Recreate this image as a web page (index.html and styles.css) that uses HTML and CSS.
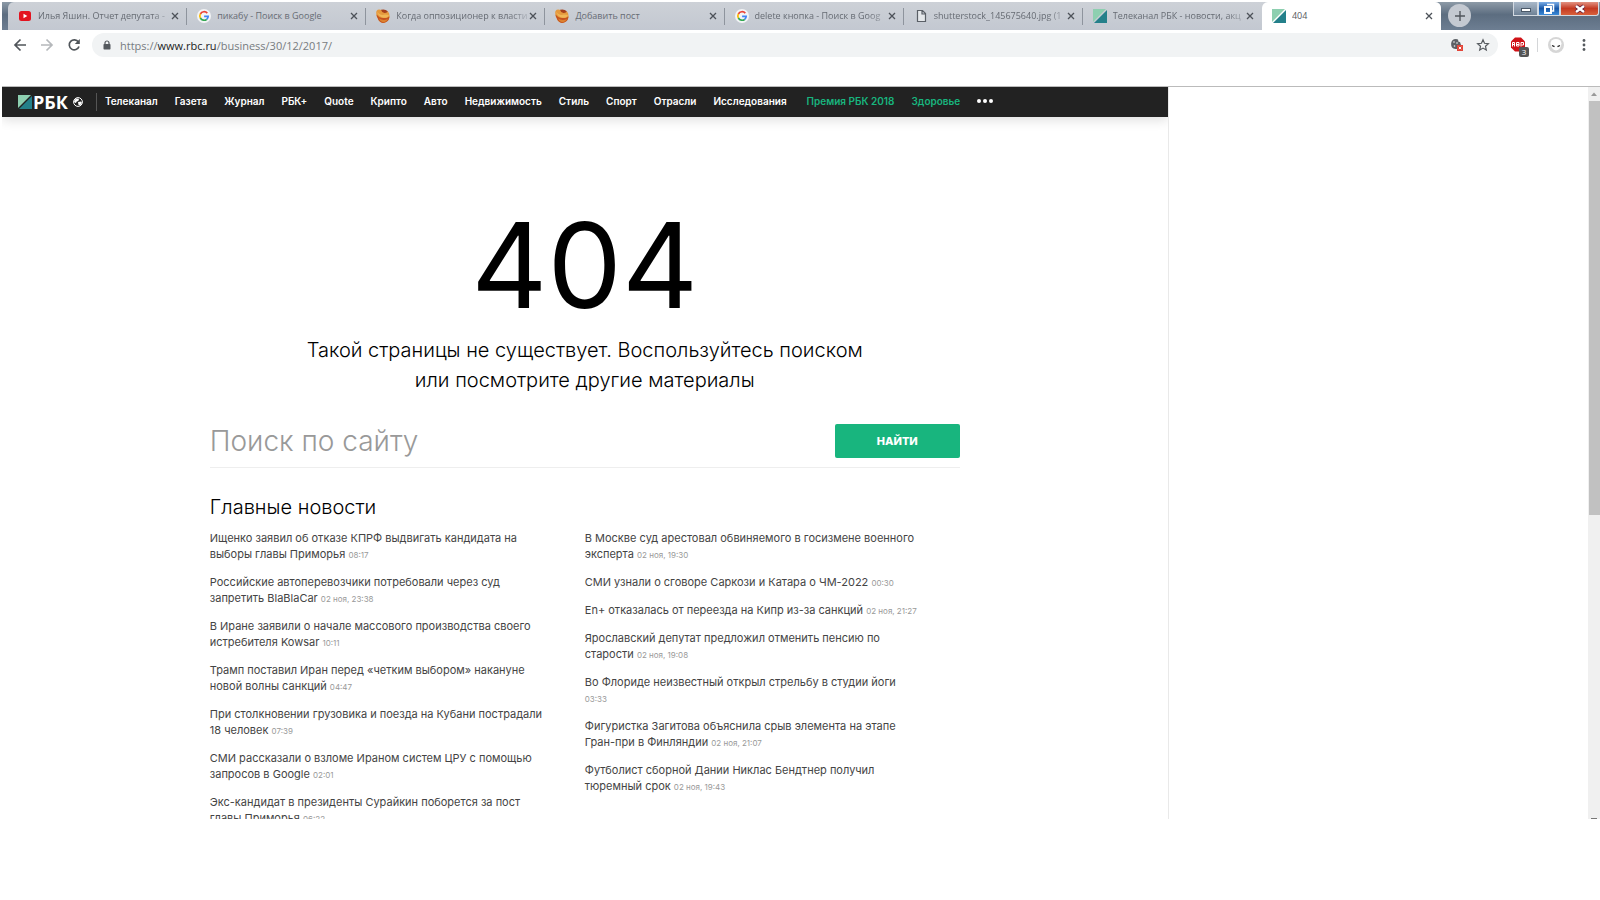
FILE: index.html
```html
<!DOCTYPE html>
<html lang="ru">
<head>
<meta charset="utf-8">
<title>404</title>
<link rel="stylesheet" href="styles.css">
</head>
<body>
<svg class="defs" aria-hidden="true">
  <defs>
    <symbol id="rbc" viewBox="0 0 14 14"><path d="M0 0h13L0 13z" fill="#8dcfb0"/><path d="M14 1v13H1z" fill="#24808a"/></symbol>
    <symbol id="google" viewBox="0 0 14 14"><circle cx="7" cy="7" r="7" fill="#f3f4f6"/><g fill="none" stroke-width="1.7"><path d="M10.3 4.1A4.2 4.2 0 0 0 3.4 5" stroke="#ea4335"/><path d="M3.4 4.9a4.2 4.2 0 0 0 0 4.2" stroke="#fbbc05"/><path d="M3.4 9a4.2 4.2 0 0 0 6.4 1.3" stroke="#34a853"/><path d="M9.7 10.4A4.2 4.2 0 0 0 11.2 7.3H7.1" stroke="#4285f4"/></g></symbol>
    <symbol id="pikabu" viewBox="0 0 14 14"><path d="M.5 2Q2 0 4.500.8L12 2.500Q14 4.500 13.400 9 12 13 7.500 14 3 13.500 1.800 9.500-.5 5 .5 2z" fill="#e59a3e"/><path d="M.6 5.500q3 3.800 7.400 3.500 3.500 0 5.500-1.500-.3 3.500-2.500 5Q7.500 15 4.500 13 2 11.500 1.800 9.200.5 7.500.6 5.500z" fill="#c4521f"/><path d="M3 9.500q4 2.500 9 .5-1.500 3-5 3.200Q4 12.500 3 9.500z" fill="#dc8230"/><path d="M.8 2.500Q4 7 9 5.500l4 .5Q12 9 8 8.800 3 8.500.8 2.500z" fill="#f0b758"/><path d="M5 .8Q9-.5 11.800 2.300 11 4.200 8.500 4 5.500 3.500 5 .8z" fill="#a5411c"/></symbol>
    <symbol id="close" viewBox="0 0 8 8"><path d="M1 1l6 6M7 1L1 7" stroke="#4d5259" stroke-width="1.300" fill="none"/></symbol>
  </defs>
</svg>
<div class="window">
  <div class="tabstrip">
    <div class="tabs">
      <div class="tab"><svg class="fav" viewBox="0 0 14 14"><rect x="1" y="2" width="12" height="10" rx="2.500" fill="#e3131f"/><path d="M5.500 4.800v4.400L9.300 7z" fill="#fff"/></svg><span class="title fade">Илья Яшин. Отчет депутата - </span><button class="x" aria-label="Закрыть"><svg><use href="#close"/></svg></button></div>
      <div class="tab"><svg class="fav"><use href="#google"/></svg><span class="title">пикабу - Поиск в Google</span><button class="x" aria-label="Закрыть"><svg><use href="#close"/></svg></button></div>
      <div class="tab"><svg class="fav"><use href="#pikabu"/></svg><span class="title fade">Когда оппозиционер к власти</span><button class="x" aria-label="Закрыть"><svg><use href="#close"/></svg></button></div>
      <div class="tab"><svg class="fav"><use href="#pikabu"/></svg><span class="title">Добавить пост</span><button class="x" aria-label="Закрыть"><svg><use href="#close"/></svg></button></div>
      <div class="tab"><svg class="fav"><use href="#google"/></svg><span class="title fade">delete кнопка - Поиск в Goog</span><button class="x" aria-label="Закрыть"><svg><use href="#close"/></svg></button></div>
      <div class="tab"><svg class="fav" viewBox="0 0 14 14"><path d="M3.500 1.500h5l3 3v8h-8zM8 1.500V5h3.500" fill="#e4e7ea" stroke="#5a5f66" stroke-width="1.200"/></svg><span class="title fade">shutterstock_145675640.jpg (1</span><button class="x" aria-label="Закрыть"><svg><use href="#close"/></svg></button></div>
      <div class="tab last"><svg class="fav"><use href="#rbc"/></svg><span class="title fade">Телеканал РБК - новости, акц</span><button class="x" aria-label="Закрыть"><svg><use href="#close"/></svg></button></div>
      <div class="tab active"><svg class="fav"><use href="#rbc"/></svg><span class="title">404</span><button class="x" aria-label="Закрыть"><svg><use href="#close"/></svg></button></div>
    </div>
    <button class="newtab" aria-label="Новая вкладка"><svg viewBox="0 0 10 10"><path d="M5 0v10M0 5h10" stroke="#50555c" stroke-width="1.400"/></svg></button>
    <div class="controls">
      <button class="min" aria-label="Свернуть"><svg viewBox="0 0 12 12"><rect x="1.500" y="5.500" width="9" height="3" fill="#fff" stroke="#4a5868"/></svg></button>
      <button class="max" aria-label="Развернуть"><svg viewBox="0 0 12 12"><path d="M4 1.500h6.500V8H9" fill="none" stroke="#fff" stroke-width="1.500"/><rect x="2" y="4" width="6" height="6" fill="none" stroke="#fff" stroke-width="2"/></svg></button>
      <button class="quit" aria-label="Закрыть окно"><svg viewBox="0 0 12 12"><path d="M2 3l8 6M10 3l-8 6" stroke="#513" stroke-width="4"/><path d="M2 3l8 6M10 3l-8 6" stroke="#fff" stroke-width="2.500"/></svg></button>
    </div>
  </div>
  <div class="toolbar">
    <div class="history">
      <button aria-label="Назад"><svg viewBox="0 0 14 14"><path d="M13 7H2M7.500 1.500L2 7l5.500 5.500" fill="none" stroke="#50555a" stroke-width="1.700"/></svg></button>
      <button aria-label="Вперед"><svg viewBox="0 0 14 14"><path d="M1 7h11M6.500 1.500L12 7l-5.500 5.500" fill="none" stroke="#b5b8bb" stroke-width="1.700"/></svg></button>
      <button aria-label="Обновить"><svg viewBox="0 0 14 14"><path d="M11.400 4A5 5 0 1 0 12 8.500" fill="none" stroke="#50555a" stroke-width="1.700"/><path d="M12.800 1v5h-5z" fill="#50555a"/></svg></button>
    </div>
    <div class="omnibox">
      <svg class="lock" viewBox="0 0 8 10"><path d="M2 4.500V3a2 2 0 0 1 4 0v1.500" fill="none" stroke="#55595e" stroke-width="1.200"/><rect x=".5" y="4" width="7" height="5.500" rx=".7" fill="#55595e"/></svg>
      <span class="url">https://<b>www.rbc.ru</b>/business/30/12/2017/</span>
      <button aria-label="Файлы cookie"><svg viewBox="0 0 14 14"><path d="M6 1a5 5 0 1 0 5 6L10 4 8.500 3.800 8 1.600z" fill="#5c6065"/><circle cx="4" cy="4" r=".8" fill="#f1f3f4"/><circle cx="7" cy="5" r=".8" fill="#f1f3f4"/><circle cx="4.500" cy="8" r=".8" fill="#f1f3f4"/><rect x="7" y="7" width="6" height="6" fill="#e34538"/><path d="M8.800 8.800l2.400 2.400m0-2.400l-2.400 2.400" stroke="#fff"/></svg></button>
      <button aria-label="В закладки"><svg viewBox="0 0 14 14"><path d="M7 1.800l1.500 3.500 3.900.4-2.900 2.600.8 3.800L7 10.100l-3.300 2 .8-3.800-2.900-2.600 3.900-.4z" fill="none" stroke="#55595e" stroke-width="1.200"/></svg></button>
    </div>
    <div class="extras">
      <button class="abp" aria-label="Adblock Plus"><svg viewBox="0 0 18 18"><path d="M5 1.500h6l4 4v6l-4 4H5l-4-4v-6z" fill="#d01217"/><path d="M2.500 10.500v-4h2v4M2.500 8.500h2M6.500 6.500h2.500v3.500h-2.500zM6.500 8.500h2.500M11 10.500v-4h2.500v2.500h-2" fill="none" stroke="#fff"/></svg><span class="count">3</span></button>
      <i class="bar"></i>
      <button aria-label="Профиль"><svg viewBox="0 0 18 18"><circle cx="9" cy="9" r="8" fill="#d6d6d6"/><path d="M3.500 7.500a5.500 4.500 0 0 1 11 0q-.5 6-5.500 7-5-1-5.500-7z" fill="#fff"/><path d="M5 9.500l2.500 1.200M13 9.500l-2.500 1.200" stroke="#222" stroke-width="1.300"/></svg></button>
      <button class="more" aria-label="Меню"><svg viewBox="0 0 14 14"><g fill="#55595e"><circle cx="7" cy="2.500" r="1.400"/><circle cx="7" cy="7" r="1.400"/><circle cx="7" cy="11.500" r="1.400"/></g></svg></button>
    </div>
  </div>
  <div class="viewport">
    <div class="page">
      <header class="topline">
        <a class="logo" href="#"><svg><use href="#rbc"/></svg>РБК</a>
        <button class="region" aria-label="Регион"><svg viewBox="0 0 10 10"><circle cx="5" cy="5" r="4.400" fill="none" stroke="#fff" stroke-width="1"/><path d="M1 4l2-2.500 3 .3-.5 2-2 1L3 6 1.500 5.500zM5 5l3-.5 1 1.500-2 2.500L5.500 8z" fill="#fff"/></svg></button>
        <nav>
          <a href="#">Телеканал</a><a href="#">Газета</a><a href="#">Журнал</a><a href="#">РБК+</a><a href="#">Quote</a><a href="#">Крипто</a><a href="#">Авто</a><a href="#">Недвижимость</a><a href="#">Стиль</a><a href="#">Спорт</a><a href="#">Отрасли</a><a href="#">Исследования</a><a class="green first" href="#">Премия РБК 2018</a><a class="green" href="#">Здоровье</a>
          <button class="dots" aria-label="Еще"><svg viewBox="0 0 16 4"><g fill="#fff"><circle cx="2" cy="2" r="2"/><circle cx="8" cy="2" r="2"/><circle cx="14" cy="2" r="2"/></g></svg></button>
        </nav>
      </header>
      <main class="content">
        <h1>404</h1>
        <p class="lead">Такой страницы не существует. Воспользуйтесь поиском<br>или посмотрите другие материалы</p>
        <form class="search">
          <input type="text" placeholder="Поиск по сайту" aria-label="Поиск по сайту">
          <button type="button">НАЙТИ</button>
        </form>
        <h2>Главные новости</h2>
        <div class="news">
          <ul>
            <li><a href="#">Ищенко заявил об отказе КПРФ выдвигать кандидата на<br>выборы главы Приморья</a> <time>08:17</time></li>
            <li><a href="#">Российские автоперевозчики потребовали через суд<br>запретить BlaBlaCar</a> <time>02 ноя, 23:38</time></li>
            <li><a href="#">В Иране заявили о начале массового производства своего<br>истребителя Kowsar</a> <time>10:11</time></li>
            <li><a href="#">Трамп поставил Иран перед «четким выбором» накануне<br>новой волны санкций</a> <time>04:47</time></li>
            <li><a href="#">При столкновении грузовика и поезда на Кубани пострадали<br>18 человек</a> <time>07:39</time></li>
            <li><a href="#">СМИ рассказали о взломе Ираном систем ЦРУ с помощью<br>запросов в Google</a> <time>02:01</time></li>
            <li><a href="#">Экс-кандидат в президенты Сурайкин поборется за пост<br>главы Приморья</a> <time>06:22</time></li>
          </ul>
          <ul>
            <li><a href="#">В Москве суд арестовал обвиняемого в госизмене военного<br>эксперта</a> <time>02 ноя, 19:30</time></li>
            <li><a href="#">СМИ узнали о сговоре Саркози и Катара о ЧМ-2022</a> <time>00:30</time></li>
            <li><a href="#">En+ отказалась от переезда на Кипр из-за санкций</a> <time>02 ноя, 21:27</time></li>
            <li><a href="#">Ярославский депутат предложил отменить пенсию по<br>старости</a> <time>02 ноя, 19:08</time></li>
            <li><a href="#">Во Флориде неизвестный открыл стрельбу в студии йоги</a><br><time>03:33</time></li>
            <li><a href="#">Фигуристка Загитова объяснила срыв элемента на этапе<br>Гран-при в Финляндии</a> <time>02 ноя, 21:07</time></li>
            <li><a href="#">Футболист сборной Дании Никлас Бендтнер получил<br>тюремный срок</a> <time>02 ноя, 19:43</time></li>
          </ul>
        </div>
      </main>
    </div>
    <div class="scrollbar"><svg viewBox="0 0 12 14"><path d="M3 9l3-3.500L9 9z" fill="#999"/></svg><i class="thumb"></i><i class="end"></i></div>
  </div>
</div>
</body>
</html>
```
FILE: styles.css
```css
* { box-sizing: border-box; }
body { margin: 0; background: #fff; font-family: Inter, "Liberation Sans", sans-serif; }
button { border: 0; padding: 0; background: none; font: inherit; display: flex; align-items: center; justify-content: center; }
a { color: inherit; text-decoration: none; }
svg { display: block; flex: none; }
.defs { position: absolute; width: 0; height: 0; }
.window { padding: 2px 0 0 2px; display: flex; flex-direction: column; height: 91vh; }

.tabstrip { display: flex; height: 28px; flex: none; padding-left: 6px; background: linear-gradient(#8d9aa7, #5c6d80 45%, #6d7e92); font-family: "Open Sans", "Noto Sans", sans-serif; }
.tabs { display: flex; flex: 1; max-width: 1433px; background: linear-gradient(#cdd1d7, #c3c8d1); border-radius: 6px 6px 0 0; }
.tab { flex: 1 1 0; min-width: 0; display: flex; align-items: center; padding: 0 8px 1px 10px; position: relative; font-size: 9px; color: #666b73; }
.tab:not(.last):not(.active)::after { content: ""; position: absolute; right: 0; top: 6px; height: 17px; width: 1px; background: #8e949d; }
.fav { width: 14px; height: 14px; margin-right: 6px; }
.title { flex: 1; min-width: 0; overflow: hidden; white-space: nowrap; }
.fade { mask-image: linear-gradient(90deg, #000 85%, #0003); }
.x svg { width: 8px; height: 8px; }
.active { background: #fff; border-radius: 6px 6px 0 0; color: #55595e; }
.newtab { width: 23px; height: 23px; border-radius: 50%; background: #c4c9d1; margin: 2px 0 0 7px; }
.newtab svg { width: 10px; height: 10px; }
.controls { display: flex; height: 14px; margin-left: auto; padding-right: 1px; }
.controls button { width: 25px; border: 1px solid #d3dae2; border-top: 0; background: linear-gradient(#a9b8c9, #6f8296); }
.controls svg { width: 12px; height: 12px; }
.controls .max { background: linear-gradient(#7daee6, #1757a8 50%, #3c8bd8); width: 22px; }
.controls .quit { background: linear-gradient(#e29282, #c43a22 50%, #d8613c); width: 39px; border-radius: 0 0 3px 0; }

.toolbar { display: flex; align-items: flex-start; flex: none; height: 57px; padding: 3px 9px 0 11px; border-bottom: 1px solid #bbb; }
.history { display: flex; gap: 13px; height: 24px; padding-right: 11px; }
.history svg { width: 14px; height: 14px; }
.omnibox { flex: 1; display: flex; align-items: center; gap: 12px; height: 24px; padding: 0 8px 0 11px; border-radius: 12px; background: #f1f3f4; font: 11px "Open Sans", "Noto Sans", sans-serif; color: #777b80; }
.omnibox svg { width: 14px; height: 14px; }
.omnibox .lock { width: 8px; height: 10px; margin-right: -3px; }
.url { flex: 1; }
.url b { font-weight: 400; color: #222; }
.extras { display: flex; align-items: center; height: 24px; padding-left: 12px; }
.extras svg { width: 18px; height: 18px; }
.abp { position: relative; }
.count { position: absolute; right: -1px; bottom: -3px; width: 10px; height: 10px; border-radius: 2px; background: #555; color: #fff; font: 8px/10px "Open Sans", sans-serif; text-align: center; }
.bar { width: 1px; height: 14px; background: #d4d6d8; margin: 0 9px; }
.extras .more { margin-left: 12px; }
.more svg { width: 14px; height: 14px; }

.viewport { flex: 1; min-height: 0; display: flex; justify-content: space-between; overflow: hidden; }
.page { width: 73%; border-right: 1px solid #e9e9e9; overflow: hidden; }
.topline { display: flex; align-items: center; height: 30px; padding-left: 16px; background: #222; color: #fff; box-shadow: 0 3px 12px #0002; font-weight: 600; font-size: 10px; }
.logo { display: flex; align-items: center; gap: 1px; font: 700 18px "Open Sans", sans-serif; }
.logo svg { width: 14px; height: 14px; }
.region { padding: 0 13px 0 5px; margin-right: 8px; height: 18px; border-right: 1px solid #555; }
.region svg { width: 10px; height: 10px; }
nav { display: flex; align-items: center; gap: 17px; white-space: nowrap; padding-bottom: 2px; }
.green { color: #18b57e; }
.first { margin-left: 3px; }
.dots svg { width: 16px; height: 4px; }

.content { max-width: 750px; margin: 0 auto; }
h1 { margin: 78px 0 0; font-size: 118px; line-height: 140px; font-weight: 400; text-align: center; }
.lead { margin: 0; font-size: 20px; line-height: 30px; text-align: center; font-weight: 300; }
.search { display: flex; align-items: center; justify-content: space-between; height: 53px; margin-top: 20px; border-bottom: 1px solid #eee; }
.search input { flex: 1; min-width: 0; border: 0; outline: 0; padding: 0; font: 300 28px Inter, sans-serif; background: none; }
.search input::placeholder { color: #999; opacity: 1; }
.search button { width: 125px; height: 34px; border-radius: 2px; background: #18b57e; color: #fff; font-size: 11px; font-weight: 800; }
h2 { margin: 25px 0 0; font-size: 20px; line-height: 28px; font-weight: 300; }
.news { display: grid; grid-template-columns: 1fr 1fr; margin-top: 9px; font-size: 11px; line-height: 16px; color: #444; white-space: nowrap; }
ul { list-style: none; margin: 0; padding: 0; }
li { margin-bottom: 12px; }
time { font-size: 8px; line-height: 8px; color: #999; }

.scrollbar { width: 12px; background: #f0f0f0; display: flex; flex-direction: column; }
.scrollbar svg { width: 12px; height: 14px; }
.thumb { height: 46vh; background: #c1c1c1; margin-left: 1px; }
.end { margin: auto auto 0; width: 6px; height: 1px; background: #777; }
```
